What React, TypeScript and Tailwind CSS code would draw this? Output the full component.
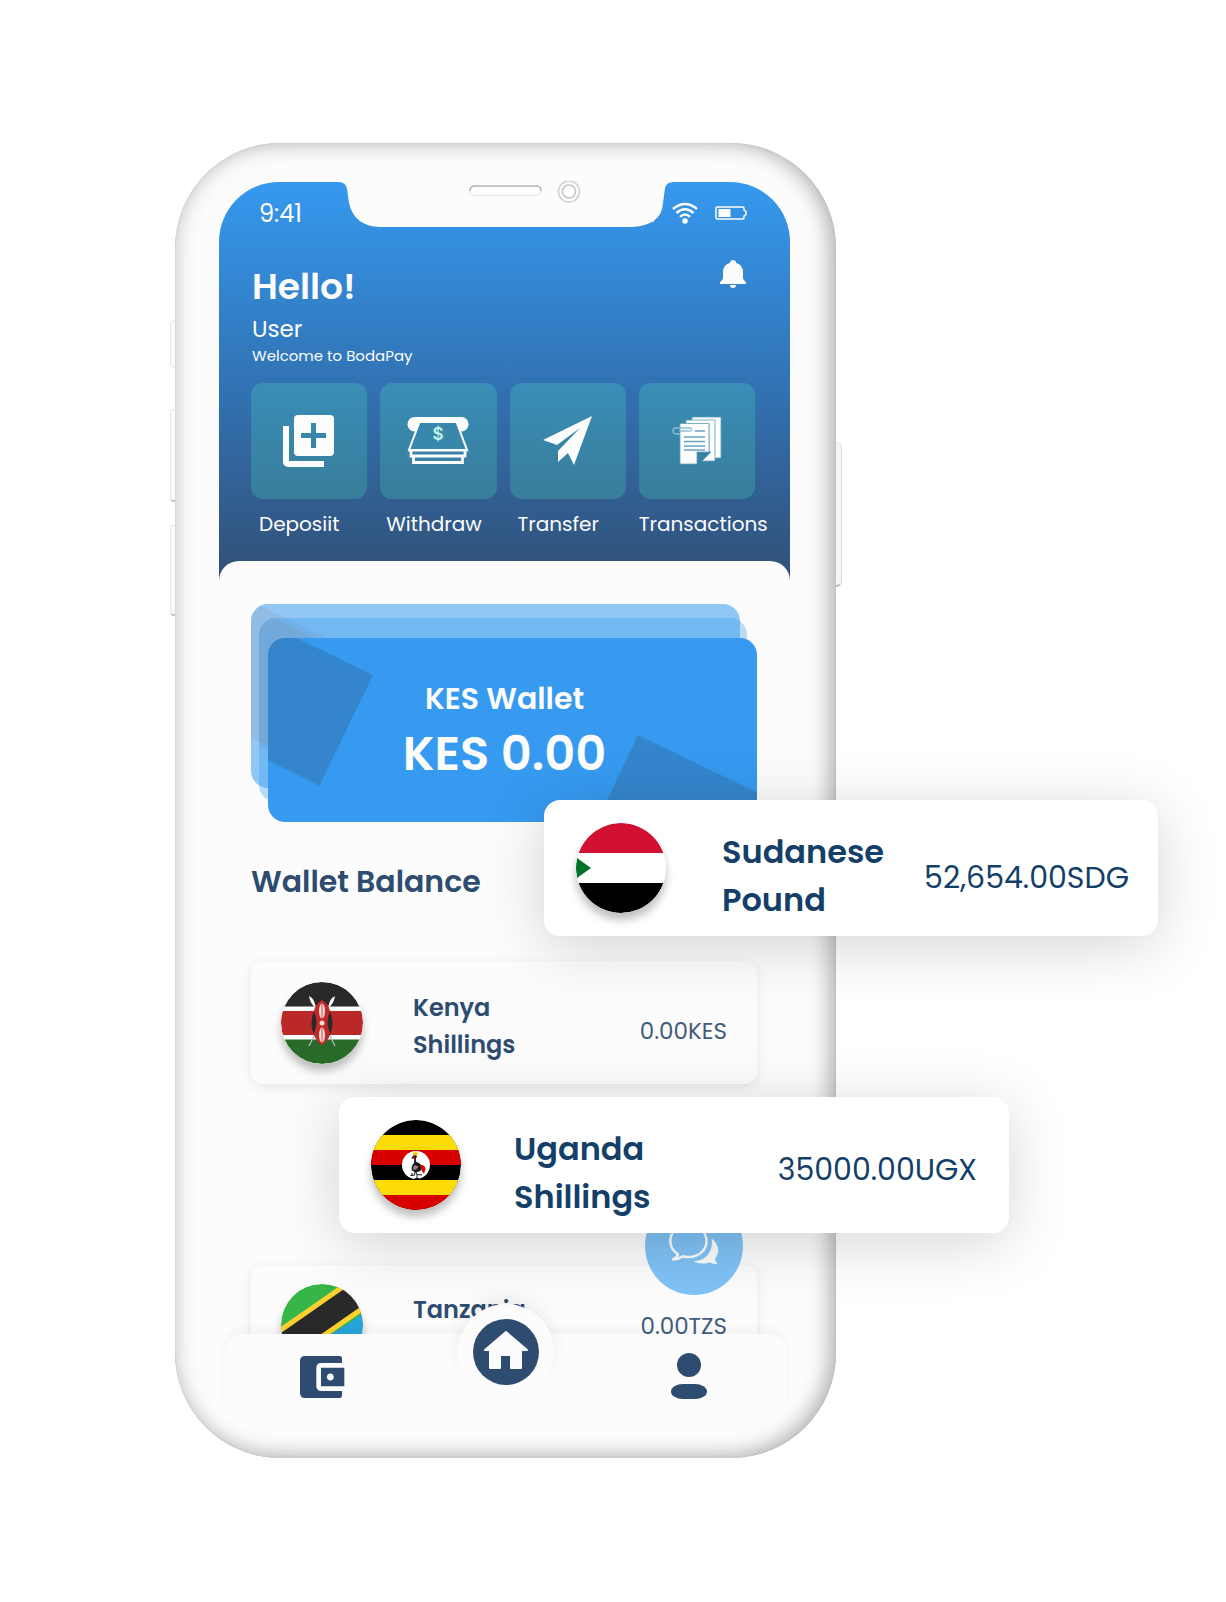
import React from "react";

const actions = [
  { label: "Deposiit", icon: <DepositIcon />, align: "pl-2" },
  { label: "Withdraw", icon: <WithdrawIcon />, align: "pl-1.5" },
  { label: "Transfer", icon: <TransferIcon />, align: "pl-2" },
  { label: "Transactions", icon: <TransactionsIcon />, align: "pl-0" },
];

function DepositIcon() {
  return (
    <svg viewBox="0 0 52 52" className="size-[52px]" fill="#fdfdfd">
      <path d="M0 11h6v35h35v6H5a5 5 0 0 1-5-5Z" />
      <path fillRule="evenodd" d="M15 0h32a4 4 0 0 1 4 4v33a4 4 0 0 1-4 4H15a4 4 0 0 1-4-4V4a4 4 0 0 1 4-4Zm13 8v10H18v5h10v10h5V23h10v-5H33V8Z" />
    </svg>
  );
}

function WithdrawIcon() {
  return (
    <svg viewBox="0 0 62 48" className="h-12 w-[62px]">
      <rect x="0.5" width="61" height="14.500" rx="7.250" fill="#fdfdfd" />
      <path d="M12.500 5 2 33h58L49.500 5Z" fill="#3a87ac" stroke="#fdfdfd" strokeWidth="2" />
      <g fill="none" stroke="#fdfdfd">
        <path d="M1.500 33.300h59" strokeWidth="2.500" />
        <path d="M4 34v5h54v-5M6.500 39v6.500h49V39" strokeWidth="2.800" />
      </g>
      <text x="31" y="23" textAnchor="middle" fontSize="17" fontWeight="600" fill="#c5f3e8" className="font-['Inter',sans-serif]">$</text>
    </svg>
  );
}

function TransferIcon() {
  return (
    <svg viewBox="0 0 50 50" className="size-[50px]" fill="#fdfdfd">
      <path d="M49 0 0 24l14 5L37 12 15 35v11l10-9 6 12Z" />
    </svg>
  );
}

function TransactionsIcon() {
  return (
    <svg viewBox="0 0 50 50" className="size-[50px]">
      <g fill="#fdfdfd" stroke="#5b9dbb" strokeWidth="0.8">
        <path d="M20 1h29v41h-7V5H20Z" />
        <path d="M14 4h29v41H30l9-9h-2V8H14Z" />
        <path d="M8 7.500h29V36H25v12H8Z" />
      </g>
      <path d="M12 21h21M12 25.500h21M12 30h21M12 34h21M23 15h10" stroke="#6ba3c3" strokeWidth="1.300" />
      <path d="M8 18H4a3 3 0 0 1 0-6h14a1.500 1.500 0 0 1 0 3H7" fill="none" stroke="#8fc0d8" strokeWidth="1.300" />
    </svg>
  );
}

function Notch() {
  return (
    <svg viewBox="0 0 336 46" className="absolute left-[119px] -top-px h-[46px] w-[336px]">
      <path d="M0 0V1Q8 1 9 8L11 22Q16 45 42 46H294Q324 44 325 22L327 7Q328 1 336 1V0Z" fill="#fcfcfc" />
      <rect x="132" y="5" width="71" height="9.500" rx="4.750" fill="#fff" stroke="#e4e4e4" />
      <path d="M132 10q0-5 5-5h61q5 0 5 5" fill="none" stroke="#b5b5b5" strokeWidth="1.500" />
      <circle cx="231" cy="10.500" r="10.500" fill="none" stroke="#d0d0d0" strokeWidth="1.500" />
      <circle cx="231" cy="10.500" r="6.500" fill="#fff" stroke="#c4c4c4" strokeWidth="1.500" />
      <rect x="313" y="35" width="3" height="6" rx="1" fill="#fcfcfc" />
    </svg>
  );
}

function StatusIcons() {
  return (
    <div className="flex items-center gap-[17px]">
      <svg viewBox="0 0 26 22" className="h-[22px] w-[26px]" fill="none" stroke="#fdfdfd" strokeWidth="2.400">
        <path d="M1 7q12-10 24 0M4.500 11q8.500-7.500 17 0M8 14.800q5-4.500 10 0" />
        <circle cx="13" cy="19" r="2.800" fill="#fdfdfd" stroke="none" />
      </svg>
      <svg viewBox="0 0 32 14" className="h-[14px] w-8" fill="none" stroke="#fdfdfd">
        <path d="M2.500 1h25q1.500 0 1.500 1.500V4l2 1.500v3L29 10v1.500q0 1.500-1.500 1.500h-25Q1 13 1 11.500v-9Q1 1 2.500 1Z" strokeWidth="1.500" />
        <rect x="3.500" y="3" width="12" height="8" fill="#fdfdfd" stroke="none" />
      </svg>
    </div>
  );
}

function WalletShapes({ shift }: { shift: number }) {
  return (
    <svg viewBox="0 0 489 184" preserveAspectRatio="none" className="absolute inset-0 size-full" fill="#34608f" fillOpacity="0.36">
      <g transform={`translate(0 ${shift})`}>
        <path d="M105 37 51.500 147.500-59 94-5.500-16.500Z" />
        <path d="M370 97 490 155v60H314Z" />
      </g>
    </svg>
  );
}

const disc = "shrink-0 rounded-full shadow-[0_7px_8px_rgba(0,0,0,0.25)]";

function SudanFlag() {
  return (
    <svg viewBox="0 0 90 90" className={`size-[90px] ${disc}`}>
      <clipPath id="sudan"><circle cx="45" cy="45" r="45" /></clipPath>
      <g clipPath="url(#sudan)">
        <path fill="#d21034" d="M0 0h90v30H0Z" />
        <path fill="#fff" d="M0 30h90v30H0Z" />
        <path d="M0 60h90v30H0Z" />
        <path fill="#007229" d="M-6 30 15 45-6 60Z" />
      </g>
    </svg>
  );
}

function UgandaFlag() {
  return (
    <svg viewBox="0 0 90 90" className={`size-[90px] ${disc}`}>
      <clipPath id="uganda"><circle cx="45" cy="45" r="45" /></clipPath>
      <g clipPath="url(#uganda)">
        <path d="M0 0h90v90H0Z" />
        <path fill="#fcdc04" d="M0 15h90v15H0ZM0 60h90v15H0Z" />
        <path fill="#d90000" d="M0 30h90v15H0ZM0 75h90v15H0Z" />
        <circle cx="45" cy="45" r="14" fill="#fff" />
        <path d="M40 38.500 42.500 35.500q3-1.500 3.500 1-2 3-.5 5.500 4 1 6 5l-2 4-5 1.500-3.500-2q-1.500-4 2-7.500 0-3 .5-4.500Z" fill="#1c1c1c" />
        <path d="M43.500 45q-2 3-1 5 3 0 5-3.500Z" fill="#8a8a8a" />
        <path d="M45 52l1 2.500 5 .5M46 54.500V58M44 58.500h4M44 52l-.5 3-4 .5M41 53v3" stroke="#111" strokeWidth="1" fill="none" />
        <path d="m42 35-.5-3 2 1 1.500-1.500 1 1.500 1.500-.5-1 3Z" fill="#fcc800" />
        <path d="M49 45q5-.5 5.500 4l-1.500 5-2-3Z" fill="#d90000" />
        <path d="m43 37 1.200 0v3.500l-1.200-1Z" fill="#d90000" />
      </g>
    </svg>
  );
}

function KenyaFlag() {
  return (
    <svg viewBox="0 0 82 82" className={`size-[82px] ${disc}`}>
      <clipPath id="kenya"><circle cx="41" cy="41" r="41" /></clipPath>
      <g clipPath="url(#kenya)">
        <path fill="#fcfcfc" d="M0 0h82v82H0Z" />
        <path fill="#292929" d="M0 0h82v24.500H0Z" />
        <path fill="#bb2828" d="M0 29h82v24H0Z" />
        <path fill="#286b28" d="M0 57.500h82V82H0Z" />
        <path d="M32 20 54 64M50 20 28 64" stroke="#b9b9b9" strokeWidth="1.300" />
        <path d="M28 14q6 3 6.500 11-5-2-6.500-11ZM54 14q-6 3-6.500 11 5-2 6.500-11Z" fill="#fcfcfc" />
        <path d="M41 18C27 31 27 51 41 63 55 51 55 31 41 18Z" fill="#292929" />
        <path d="M41 18c-6 4-8.500 9-7.500 13q4 10 0 19c-1 4 2.500 10 7.500 13 5-3 8.500-9 7.500-13q-4-9 0-19c1-4-1.500-9-7.500-13Z" fill="#c22a2a" />
        <g fill="#f5dddd">
          <ellipse cx="41" cy="29" rx="3" ry="7.500" />
          <circle cx="41" cy="41" r="2.500" />
          <ellipse cx="41" cy="53" rx="3" ry="7.500" />
        </g>
        <path d="M41 22v14M41 46v14" stroke="#c22a2a" strokeWidth=".8" />
      </g>
    </svg>
  );
}

function TanzaniaFlag() {
  return (
    <svg viewBox="0 0 82 82" className={`size-[82px] ${disc}`}>
      <clipPath id="tanzania"><circle cx="41" cy="41" r="41" /></clipPath>
      <g clipPath="url(#tanzania)">
        <path fill="#36b548" d="M0 0h82v82H0Z" />
        <path fill="#27a3dd" d="M82 30v52H0Z" />
        <path stroke="#fcd12f" strokeWidth="34" d="M-15 74 97-4" />
        <path stroke="#292929" strokeWidth="24" d="M-15 74 97-4" />
      </g>
    </svg>
  );
}

function FloatingCard({ flag, name, amount, place, gap, tail }: { flag: React.ReactNode; name: string; amount: string; place: string; gap: string; tail: string }) {
  return (
    <article className={`absolute z-20 flex h-[136px] items-center rounded-2xl bg-white pl-8 text-[#143f69] shadow-[0_10px_60px_rgba(0,0,0,0.17)] ${place}`}>
      {flag}
      <h3 className={`w-[170px] pt-4 text-[32px] leading-[48px] font-semibold ${gap}`}>{name}</h3>
      <p className={`ml-auto text-[30px] leading-10 whitespace-nowrap ${tail}`}>{amount}</p>
    </article>
  );
}

function BalanceRow({ flag, name, amount, size, drop }: { flag: React.ReactNode; name: string; amount: string; size: string; drop: string }) {
  return (
    <li className={`flex items-center rounded-xl bg-[#fcfcfc] pr-[30px] pl-[30px] shadow-[0_3px_12px_rgba(0,0,0,0.09)] ${size}`}>
      {flag}
      <h3 className="ml-[50px] w-[120px] pt-1.5 text-2xl leading-[37px] font-semibold">{name}</h3>
      <p className={`ml-auto text-[23px] leading-8 text-[#425c7d] ${drop}`}>{amount}</p>
    </li>
  );
}

export default function App() {
  return (
    <main className="min-h-screen overflow-hidden bg-white pt-[143px] pb-36 pl-[175px] font-['Poppins','Inter',sans-serif]">
      <div className="relative w-full max-w-[661px]">
        <span className="absolute top-[177px] -left-[5px] h-12 w-2 rounded-l-sm border border-[#ececec] bg-[#fafafa]" />
        <span className="absolute top-[266px] -left-[5px] h-[93px] w-2 rounded-l-sm border border-b-2 border-[#e6e6e6] border-b-[#c4c4c4] bg-[#fafafa]" />
        <span className="absolute top-[382px] -left-[5px] h-[91px] w-2 rounded-l-sm border border-b-2 border-[#e6e6e6] border-b-[#c4c4c4] bg-[#fafafa]" />
        <span className="absolute top-[299px] -right-[6px] h-[145px] w-3 rounded-r-md border border-b-2 border-[#dcdcdc] border-b-[#bdbdbd] bg-[#f6f6f6]" />

        <section className="relative rounded-[105px] bg-[#fcfcfc] pt-[39px] pr-[46px] pb-[74px] pl-11 shadow-[inset_0_0_1px_rgba(0,0,0,0.25),inset_0_0_24px_rgba(0,0,0,0.16),inset_-7px_-2px_20px_rgba(0,0,0,0.2)]">
          <header className="relative rounded-t-[60px] bg-linear-to-b from-[#3599ef] via-[#3172b3] via-52% to-[#305077] pb-[42px] text-[#fcfcfc]">
            <Notch />
            <div className="flex h-[62px] items-center justify-between pr-[43px] pl-10">
              <time className="pt-0.5 text-2xl">9:41</time>
              <StatusIcons />
            </div>
            <div className="mt-4 flex items-start justify-between pr-8 pl-[33px]">
              <div>
                <h1 className="text-4xl leading-[54px] font-semibold">Hello!</h1>
                <p className="text-[23px] leading-[30px]">User</p>
                <p className="text-[15px] leading-6">Welcome to BodaPay</p>
              </div>
              <button type="button" aria-label="Notifications" className="mr-3">
                <svg viewBox="0 0 26 28" className="h-7 w-[26px]" fill="#fcfcfc">
                  <path d="M13 0a3 3 0 0 0-3 2.800Q3 5 3 12v6q0 2-3 4v2h26v-2q-3-2-3-4v-6q0-7-7-9.200A3 3 0 0 0 13 0ZM10 25h6q0 3-3 3t-3-3Z" />
                </svg>
              </button>
            </div>
            <nav aria-label="Actions" className="mt-[15px] grid grid-cols-4 gap-x-[13px] pr-[35px] pl-8">
              {actions.map((a) => (
                <button key={a.label} type="button" className="min-w-0 text-left">
                  <span className="flex h-[116px] items-center justify-center rounded-xl bg-linear-to-b from-[#398eb7] to-[#387d9b]">{a.icon}</span>
                  <span className={`mt-[10px] block text-xl leading-[30px] whitespace-nowrap ${a.align}`}>{a.label}</span>
                </button>
              ))}
            </nav>
          </header>

          <div className="relative -mt-5 rounded-t-[20px] bg-[#fcfcfc] pt-[43px] pr-[33px] pl-8 text-[#2e4c70]">
            <div className="relative pt-[34px] pl-[17px]">
              <div className="absolute top-0 right-[17px] left-0 h-[184px] overflow-hidden rounded-[17px] bg-[#349af0] opacity-[0.53]"><WalletShapes shift={11} /></div>
              <div className="absolute top-[14px] right-[10px] left-2 h-[184px] overflow-hidden rounded-[17px] bg-[#349af0] opacity-[0.33]"><WalletShapes shift={7} /></div>
              <div className="relative h-[184px] overflow-hidden rounded-[17px] bg-[#369af0] pt-[37px] pr-4 text-center font-semibold text-[#fcfcfc]">
                <WalletShapes shift={0} />
                <p className="relative text-[30px] leading-[48px]">KES Wallet</p>
                <p className="relative text-5xl leading-[62px]">KES 0.00</p>
              </div>
            </div>
            <h2 className="mt-10 text-[30px] leading-10 font-semibold">Wallet Balance</h2>
            <ul className="mt-[59px] flex flex-col gap-[181px]">
              <BalanceRow flag={<KenyaFlag />} name="Kenya Shillings" amount="0.00KES" size="h-[123px]" drop="pt-[17px]" />
              <BalanceRow flag={<TanzaniaFlag />} name="Tanzania Shillings" amount="0.00TZS" size="h-[119px]" drop="pt-0.5" />
            </ul>
          </div>

          <button type="button" aria-label="Chat" className="absolute right-[93px] bottom-[163px] flex size-[98px] items-center justify-center rounded-full bg-[#7fc2f5]">
            <svg viewBox="0 0 50 50" className="size-[50px]" fill="#fcfcfc">
              <path d="M9 33.500Q1.300 28 1.300 20C1.300 11 9 4 19.500 4S37.500 11 37.500 20 30 36 19.500 36q-3 0-5.500-.8Q9 38.500 4 38.500 8 36.500 9 33.500Z" fill="none" stroke="#fcfcfc" strokeWidth="2.500" strokeLinejoin="round" />
              <path d="M42.500 17.500C50 23 51.500 31 46 37.500q0 3 2.500 5.500-4 .3-7.500-1.500-8 2.500-17-1C36 40.500 45 30.500 42.500 17.500Z" />
            </svg>
          </button>

          <nav aria-label="Main" className="absolute right-[49px] bottom-11 left-[50px] grid h-20 grid-cols-3 rounded-t-[18px] bg-[#fcfcfc] px-1 shadow-[0_-6px_8px_rgba(0,0,0,0.03)]">
            <a href="#wallet" aria-label="Wallet" className="flex justify-center pt-[15px]">
              <svg viewBox="0 0 24 24" className="size-14" fill="#2e4c70">
                <path d="M21 18v2q0 1-1 1H5a2 2 0 0 1-2-2V5a2 2 0 0 1 2-2h15q1 0 1 1v2h-9a2 2 0 0 0-2 2v8a2 2 0 0 0 2 2h9zm-9-2h10V8H12v8zm4-2.500c-.830 0-1.500-.670-1.500-1.500s.670-1.500 1.500-1.500 1.500.670 1.500 1.500-.670 1.500-1.500 1.500z" />
              </svg>
            </a>
            <a href="#home" aria-label="Home" className="-mt-[30px] flex size-24 items-center justify-center justify-self-center rounded-full bg-[#fcfcfc] shadow-[0_-8px_16px_rgba(0,0,0,0.06)]">
              <span className="flex size-[66px] items-center justify-center rounded-full bg-[#2e4c70]">
                <svg viewBox="0 0 44 40" className="mb-1 h-10 w-11" fill="#fcfcfc" stroke="#fcfcfc" strokeWidth="2" strokeLinejoin="round">
                  <path d="M22 2 1 20h5v18h10V25h11v13h10V20h6Z" />
                </svg>
              </span>
            </a>
            <a href="#profile" aria-label="Profile" className="flex justify-center pt-[19px] pr-1">
              <svg viewBox="0 0 38 46" className="h-[46px] w-[38px]" fill="#2e4c70">
                <circle cx="19" cy="12" r="12" />
                <rect x="1" y="31" width="36" height="15" rx="12" ry="7.500" />
              </svg>
            </a>
          </nav>
        </section>

        <FloatingCard flag={<SudanFlag />} name="Sudanese Pound" amount="52,654.00SDG" place="top-[657px] left-[369px] w-[614px]" gap="ml-[56px]" tail="pt-5 pr-[29px]" />
        <FloatingCard flag={<UgandaFlag />} name="Uganda Shillings" amount="35000.00UGX" place="top-[954px] left-[164px] w-[670px]" gap="ml-[53px]" tail="pt-[10px] pr-8" />
      </div>
    </main>
  );
}
